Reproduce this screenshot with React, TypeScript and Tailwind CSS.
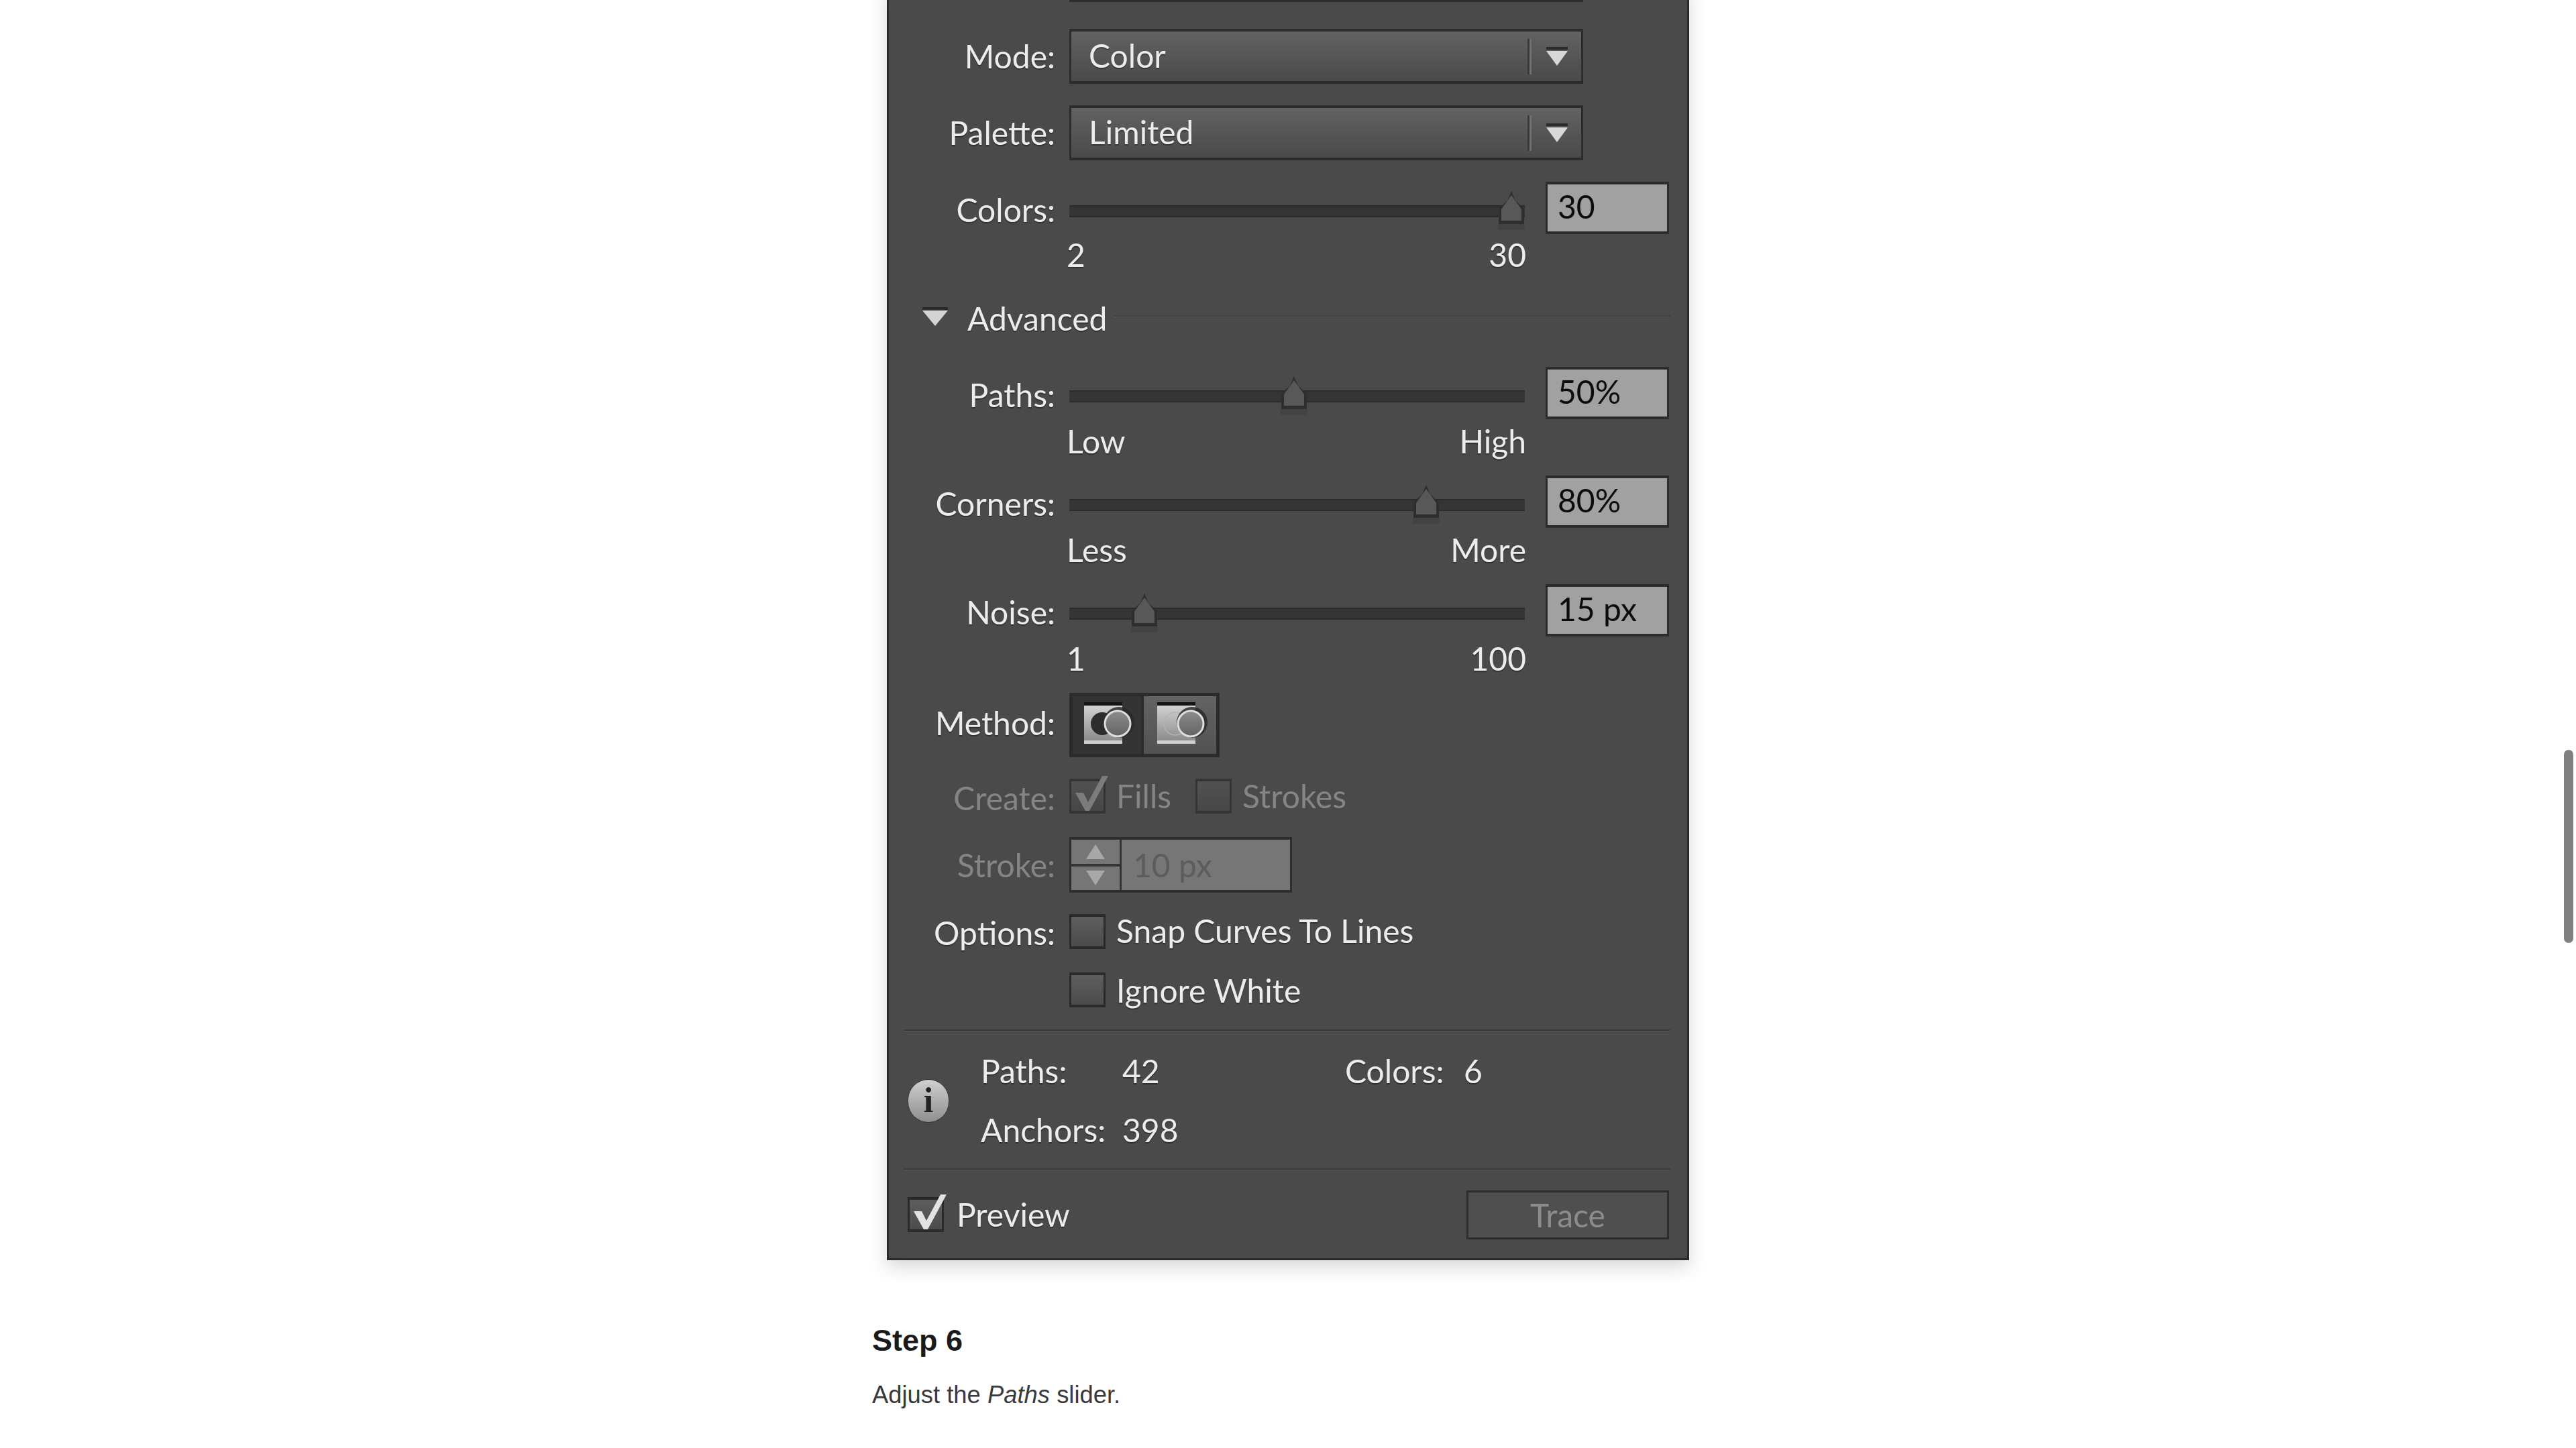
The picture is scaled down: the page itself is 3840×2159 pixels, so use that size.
import React from "react";

const ui = "font-['Lato','Open_Sans',sans-serif] text-[48px] leading-none text-[#ececec] [text-shadow:0_2px_1px_rgba(0,0,0,0.35)]";

function Label({ text, dim, className = "" }: { text: string; dim?: boolean; className?: string }) {
  return (
    <div className={`w-[248px] shrink-0 text-right ${dim ? "text-[#858585]" : ""} ${className}`}>{text}</div>
  );
}

function Dropdown({ value }: { value: string }) {
  return (
    <div className="flex h-[82px] w-[766px] items-center border-x-[3px] border-y-[4px] border-[#2c2c2c] bg-linear-to-b from-[#626262] to-[#4a4a4a]">
      <div className="ml-[26px] mb-[3px] flex-1">{value}</div>
      <div className="h-[53px] w-[6px] border-l-[3px] border-[#3a3a3a] bg-[#707070]" />
      <svg className="mr-[20px] ml-[22px]" width="32" height="28" viewBox="0 0 32 28">
        <rect x="0" y="0" width="32" height="4" fill="#2a2a2a" />
        <path d="M0 6H32L16 28Z" fill="#d8d8d8" />
      </svg>
    </div>
  );
}

function Slider({ label, value, pos }: { label: string; value: string; pos: number }) {
  return (
    <div className="flex h-[78px] items-center gap-[21px]">
      <Label text={label} className="mt-[5px]" />
      <div className="relative mt-[9px] h-[18px] w-[679px] border-y-[2px] border-[#2b2b2b] bg-[#353535]">
        <svg
          className="absolute top-[-23px]"
          style={{ left: pos - 22 }}
          width="44"
          height="58"
          viewBox="0 0 44 58"
        >
          <rect x="2" y="49" width="40" height="9" fill="#434343" />
          <path d="M22 0L28 14L41 26V49H3V26L16 14Z" fill="#2e2e2e" />
          <path d="M22 6L37 27V44H7V27Z" fill="#585858" />
        </svg>
      </div>
      <div className="ml-[10px] flex h-full w-[184px] items-start border-x-[3px] border-y-[4px] border-[#2c2c2c] bg-[#a1a1a1] pt-[9px] pl-[15px] text-[#0c0c0c] [text-shadow:none]">
        {value}
      </div>
    </div>
  );
}

function Scale({ min, max, className }: { min: string; max: string; className: string }) {
  return (
    <div className={`ml-[265px] flex h-[40px] w-[685px] items-center justify-between ${className}`}>
      <span>{min}</span>
      <span>{max}</span>
    </div>
  );
}

function Check({ on, dim }: { on?: boolean; dim?: boolean }) {
  return (
    <div
      className={`relative h-[52px] w-[54px] shrink-0 border-x-[3px] border-y-[4px] bg-linear-to-b ${
        dim ? "border-[#353535] from-[#525252] to-[#464646]" : "border-[#2a2a2a] from-[#5e5e5e] to-[#4b4b4b]"
      }`}
    >
      {on && (
        <svg className="absolute top-[-10px] left-[3px]" width="52" height="56" viewBox="0 0 52 56">
          <path
            d="M3 27 L15 27 L22 41 L43 2 L52 2 L24 54 L18 54Z"
            fill={dim ? "#7c7c7c" : "#e2e2e2"}
          />
        </svg>
      )}
    </div>
  );
}

function MethodIcon({ active }: { active: boolean }) {
  return (
    <svg width="76" height="62" viewBox="0 0 76 62" className="mb-[6px] shrink-0">
      <defs>
        <linearGradient id={active ? "sq1" : "sq2"} x1="0" y1="0" x2="0" y2="1">
          <stop offset="0" stopColor="#d2d2d2" />
          <stop offset="1" stopColor="#8c8c8c" />
        </linearGradient>
        <linearGradient id={active ? "ci1" : "ci2"} x1="0" y1="0" x2="0" y2="1">
          <stop offset="0" stopColor="#8c8c8c" />
          <stop offset="1" stopColor="#636363" />
        </linearGradient>
      </defs>
      <rect x="0" y="0" width="57" height="5" fill="#141414" />
      <rect x="0" y="5" width="57" height="52" fill={`url(#${active ? "sq1" : "sq2"})`} />
      <rect x="0" y="57" width="57" height="5" fill="#cfcfcf" />
      {active ? (
        <circle cx="27" cy="32" r="17" fill="#2c2c2c" />
      ) : (
        <circle cx="27" cy="32" r="17" fill="none" stroke="#b4b4b4" strokeWidth="1.5" />
      )}
      <circle cx="52" cy="30" r="23" fill="#2a2a2a" opacity="0.85" />
      <circle cx="50" cy="32" r="19" fill={`url(#${active ? "ci1" : "ci2"})`} stroke="#dedede" strokeWidth="3" />
    </svg>
  );
}

function Divider({ className }: { className: string }) {
  return <div className={`ml-[22px] h-[3px] w-[1143px] border-b border-[#565656] bg-[#3a3a3a] ${className}`} />;
}

export default function App() {
  return (
    <div className="relative h-[2159px] overflow-hidden bg-white">
      <div className="mx-auto w-[1240px]">
        <div className="ml-[22px] -mt-[20px] w-[1196px] border-x-[3px] border-b-[3px] border-[#2a2a2a] bg-[#4a4a4a] shadow-[0_10px_26px_rgba(0,0,0,0.16)]">
          <div className={`blur-[0.5px] ${ui}`}>
            <div className="ml-[269px] h-[23px] w-[766px] border-x-[3px] border-b-[4px] border-[#2c2c2c] bg-[#4a4a4a]" />

            <div className="mt-[40px] flex items-center gap-[21px]">
              <Label text="Mode:" />
              <Dropdown value="Color" />
            </div>
            <div className="mt-[32px] flex items-center gap-[21px]">
              <Label text="Palette:" />
              <Dropdown value="Limited" />
            </div>

            <div className="mt-[32px]">
              <Slider label="Colors:" value="30" pos={659} />
            </div>
            <Scale min="2" max="30" className="mt-[11px]" />

            <div className="mt-[55px] flex h-[40px] items-center">
              <svg className="ml-[50px] mb-[6px]" width="38" height="28" viewBox="0 0 38 28">
                <rect x="0" y="0" width="38" height="4" fill="#2a2a2a" />
                <path d="M0 5H38L19 28Z" fill="#d4d4d4" />
              </svg>
              <span className="ml-[29px]">Advanced</span>
              <div className="ml-[10px] mb-[8px] h-[3px] flex-1 mr-[25px] border-b border-[#555] bg-[#404040]" />
            </div>

            <div className="mt-[52px]">
              <Slider label="Paths:" value="50%" pos={335} />
            </div>
            <Scale min="Low" max="High" className="mt-[13px]" />

            <div className="mt-[31px]">
              <Slider label="Corners:" value="80%" pos={532} />
            </div>
            <Scale min="Less" max="More" className="mt-[13px]" />

            <div className="mt-[31px]">
              <Slider label="Noise:" value="15 px" pos={112} />
            </div>
            <Scale min="1" max="100" className="mt-[13px]" />

            <div className="mt-[31px] flex h-[96px] items-center gap-[21px]">
              <Label text="Method:" className="mb-[6px]" />
              <div className="flex h-[96px] w-[224px] border-[5px] border-[#2b2b2b] bg-[#2b2b2b]">
                <div className="flex h-full w-[102px] items-center pl-[17px] bg-[#343434]">
                  <MethodIcon active />
                </div>
                <div className="ml-[4px] flex h-full flex-1 items-center pl-[20px] bg-linear-to-b from-[#636363] to-[#525252]">
                  <MethodIcon active={false} />
                </div>
              </div>
            </div>

            <div className="mt-[32px] flex h-[52px] items-center gap-[21px] text-[#858585] [text-shadow:none]">
              <Label text="Create:" dim className="mt-[6px]" />
              <Check on dim />
              <span className="-ml-[5px]">Fills</span>
              <div className="ml-[15px]">
                <Check dim />
              </div>
              <span className="-ml-[5px]">Strokes</span>
            </div>

            <div className="mt-[35px] flex h-[83px] items-center gap-[21px] text-[#858585] [text-shadow:none]">
              <Label text="Stroke:" dim />
              <div className="flex h-[83px] w-[332px] border-x-[3px] border-y-[4px] border-[#2e2e2e] bg-[#767676]">
                <div className="flex w-[75px] flex-col border-r-[3px] border-[#333]">
                  <div className="flex flex-1 items-center justify-center border-b-[4px] border-[#353535]">
                    <svg width="28" height="22" viewBox="0 0 28 22">
                      <path d="M14 0L28 22H0Z" fill="#a8a8a8" />
                    </svg>
                  </div>
                  <div className="flex flex-1 items-center justify-center">
                    <svg width="28" height="22" viewBox="0 0 28 22">
                      <path d="M0 0H28L14 22Z" fill="#a8a8a8" />
                    </svg>
                  </div>
                </div>
                <div className="flex flex-1 items-center pl-[17px] text-[#5c5c5c]">10 px</div>
              </div>
            </div>

            <div className="mt-[32px] flex h-[51px] items-center gap-[21px]">
              <Label text="Options:" className="mt-[4px]" />
              <Check />
              <span className="-ml-[5px] mb-[2px]">Snap Curves To Lines</span>
            </div>
            <div className="mt-[36px] ml-[269px] flex h-[52px] items-center gap-[16px]">
              <Check />
              <span className="mt-[2px]">Ignore White</span>
            </div>

            <Divider className="mt-[33px]" />

            <div className="mt-[39px] flex h-[128px] items-center pl-[28px]">
              <div className="flex h-[65px] w-[62px] items-center justify-center rounded-full border border-[#333] bg-linear-to-b from-[#cfcfcf] to-[#8f8f8f] font-['Liberation_Serif',serif] text-[52px] font-bold text-[#222] [text-shadow:none]">
                i
              </div>
              <div className="ml-[47px] grid grid-cols-[211px_332px_auto_1fr] gap-y-[48px]">
                <div className="h-[40px] leading-[40px]">Paths:</div>
                <div className="h-[40px] leading-[40px]">42</div>
                <div className="h-[40px] w-[177px] leading-[40px]">Colors:</div>
                <div className="h-[40px] leading-[40px]">6</div>
                <div className="h-[40px] leading-[40px]">Anchors:</div>
                <div className="h-[40px] leading-[40px]">398</div>
              </div>
            </div>

            <Divider className="mt-[37px]" />

            <div className="mt-[30px] mb-[28px] flex h-[73px] items-center pr-[27px]">
              <div className="ml-[28px] mt-[-2px]">
                <Check on />
              </div>
              <span className="ml-[19px] mb-[2px]">Preview</span>
              <div className="ml-auto flex h-[73px] w-[302px] items-center justify-center border-[3px] border-[#2c2c2c] bg-[#4f4f4f] text-[#8c8c8c] [text-shadow:none]">
                Trace
              </div>
            </div>
          </div>
        </div>

        <h2 className="mt-[95px] h-[50px] font-['Liberation_Sans',sans-serif] text-[45px] leading-[50px] font-bold text-[#1a1a1a]">
          Step 6
        </h2>
        <p className="mt-[34px] h-[44px] font-['Liberation_Sans',sans-serif] text-[36.4px] leading-[44px] text-[#3a3a3a]">
          Adjust the <em>Paths</em> slider.
        </p>
      </div>

      <div className="absolute top-[1118px] right-[4px] h-[288px] w-[14px] rounded-full bg-[#808080]" />
    </div>
  );
}
